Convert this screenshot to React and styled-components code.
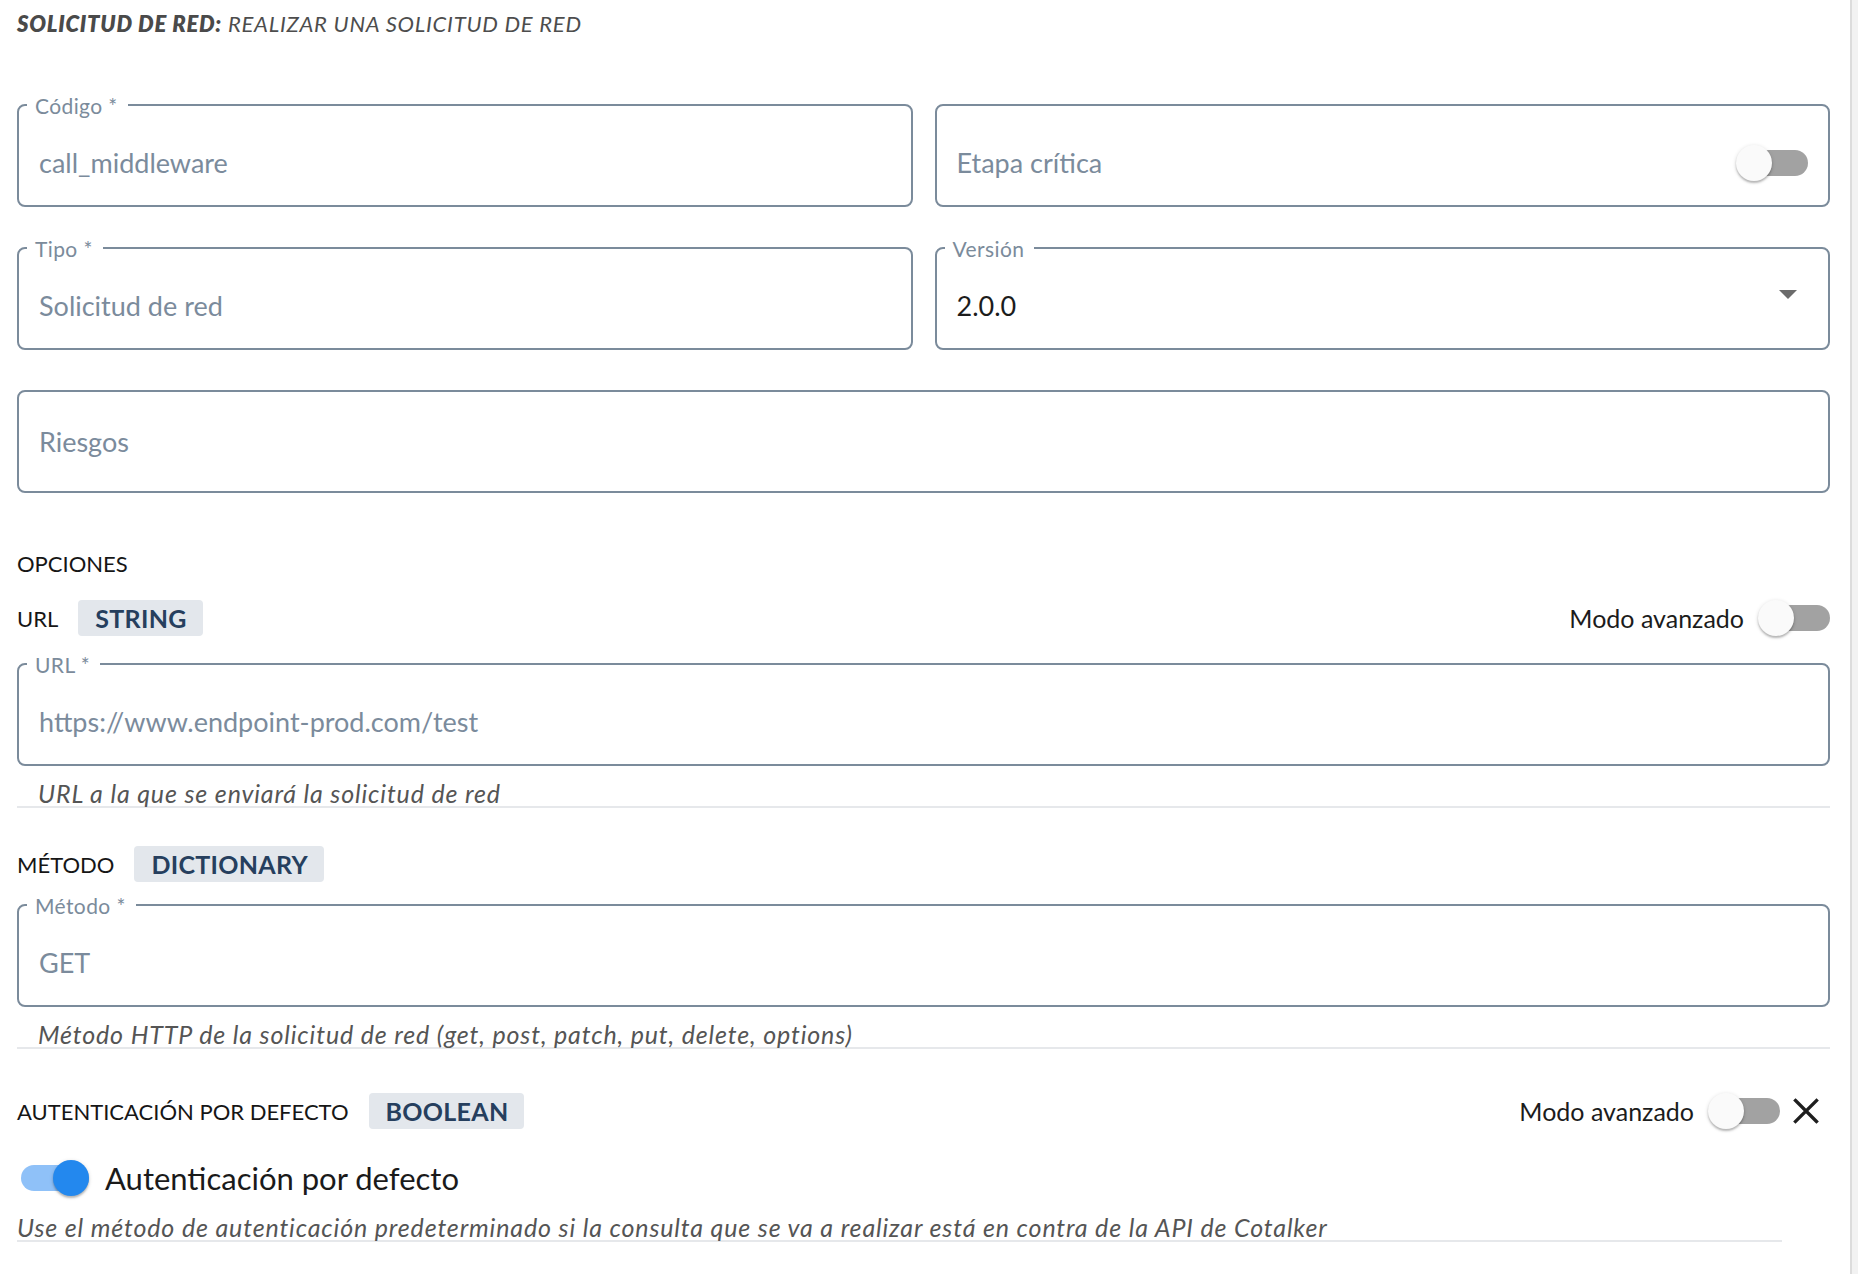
import React from "react";
import styled, { createGlobalStyle } from "styled-components";

const GlobalStyle = createGlobalStyle`
  html, body {
    margin: 0;
    padding: 0;
    background: #fff;
  }
  body {
    font-family: Lato, "Open Sans", sans-serif;
    color: #1f1f1f;
  }
`;

const Screen = styled.div`
  display: flex;
  min-height: 1274px;
`;

const Page = styled.main`
  flex: 1;
  padding: 12px 20px 0 17px;
`;

const ScrollTrack = styled.div`
  width: 6px;
  background: #f2f2f2;
  border-left: 2px solid #dcdcdc;
`;

const Title = styled.h1`
  margin: 0;
  font-size: 22px;
  line-height: 24px;
  font-style: italic;
  font-weight: 400;
  color: #4d4d4d;
  letter-spacing: 0.75px;

  b {
    font-weight: 800;
    color: #4a4a4a;
  }
`;

const Grid = styled.div`
  display: grid;
  grid-template-columns: 1fr 1fr;
  column-gap: 22px;
  row-gap: 40px;
  margin-top: 68px;
`;

const Field = styled.div`
  position: relative;
  grid-column: ${(p) => (p.$wide ? "1 / -1" : "auto")};
  height: 103px;
  box-sizing: border-box;
  border: 2px solid #7b8b9b;
  border-radius: 8px;
  display: flex;
  align-items: center;
  padding: ${(p) => (p.$raised ? "14px" : "0")} 20px 0 20px;
`;

const FieldLabel = styled.span`
  position: absolute;
  top: -11px;
  left: 8px;
  padding: 0 10px 0 8px;
  background: #fff;
  font-size: 21px;
  line-height: 22px;
  letter-spacing: 0.4px;
  color: #7b8b9b;
`;

const Value = styled.span`
  flex: 1;
  font-size: 27px;
  color: ${(p) => (p.$dark ? "#1c1c1c" : "#7b8b9c")};
`;

const Caret = styled.span`
  width: 0;
  height: 0;
  border-left: 9px solid transparent;
  border-right: 9px solid transparent;
  border-top: 9px solid #6b6b6b;
  margin: 0 11px 22px 0;
`;

const SwitchBox = styled.span`
  position: relative;
  display: inline-block;
  flex: none;
  width: 72px;
  height: 38px;
`;

const Track = styled.span`
  position: absolute;
  left: 4px;
  right: 0;
  top: 6px;
  height: 26px;
  border-radius: 13px;
  background: ${(p) => (p.$on ? "#8fc1f8" : "#a2a2a2")};
`;

const Thumb = styled.span`
  position: absolute;
  top: 1px;
  ${(p) => (p.$on ? "right: 0;" : "left: 0;")}
  width: 36px;
  height: 36px;
  border-radius: 50%;
  background: ${(p) => (p.$on ? "#2388ee" : "#fafafa")};
  box-shadow: 0 2px 2px rgba(0, 0, 0, 0.22), 0 1px 4px rgba(0, 0, 0, 0.14);
`;

function Switch({ on }) {
  return (
    <SwitchBox>
      <Track $on={on} />
      <Thumb $on={on} />
    </SwitchBox>
  );
}

const SectionTitle = styled.div`
  margin-top: 58px;
  font-size: 22px;
  line-height: 26px;
  color: #161616;
`;

const Section = styled.section`
  margin-top: ${(p) => p.$top}px;
  padding-right: ${(p) => (p.$narrow ? "48px" : "0")};
`;

const HeaderRow = styled.div`
  display: flex;
  align-items: center;
  height: 40px;
  margin-right: ${(p) => (p.$narrow ? "-48px" : "0")};
`;

const OptName = styled.span`
  font-size: 22px;
  color: #161616;
  margin-right: 20px;
`;

const Chip = styled.span`
  display: inline-flex;
  align-items: center;
  height: 36px;
  padding: 0 16px 0 17px;
  border-radius: 4px;
  background: #e3e7ec;
  color: #263f5e;
  font-weight: 700;
  font-size: 25px;
  letter-spacing: 0.3px;
`;

const Advanced = styled.div`
  margin-left: auto;
  display: flex;
  align-items: center;
  gap: 14px;
  font-size: 25px;
  color: #1c1c1c;
`;

const CloseIcon = styled.svg`
  width: 36px;
  height: 36px;
  margin-left: -6px;
  margin-right: 6px;
`;

const FieldWrap = styled.div`
  margin-top: ${(p) => p.$gap}px;
`;

const Helper = styled.div`
  margin-top: 14px;
  padding-left: ${(p) => (p.$flush ? "0" : "21px")};
  font-size: 25px;
  line-height: 26px;
  letter-spacing: 0.85px;
  font-style: italic;
  color: #555;
  border-bottom: 2px solid #e6e8eb;
  white-space: nowrap;
`;

const ToggleRow = styled.div`
  display: flex;
  align-items: center;
  gap: 16px;
  height: 44px;
  margin-top: 25px;
  font-size: 31px;
  color: #1a1a1a;
`;

export default function App() {
  return (
    <>
      <GlobalStyle />
      <Screen>
        <Page>
          <Title>
            <b>SOLICITUD DE RED:</b> REALIZAR UNA SOLICITUD DE RED
          </Title>

          <Grid>
            <Field $raised>
              <FieldLabel>Código *</FieldLabel>
              <Value>call_middleware</Value>
            </Field>
            <Field $raised>
              <Value>Etapa crítica</Value>
              <Switch on={false} />
            </Field>
            <Field $raised>
              <FieldLabel>Tipo *</FieldLabel>
              <Value>Solicitud de red</Value>
            </Field>
            <Field $raised>
              <FieldLabel>Versión</FieldLabel>
              <Value $dark>2.0.0</Value>
              <Caret />
            </Field>
            <Field $wide>
              <Value>Riesgos</Value>
            </Field>
          </Grid>

          <SectionTitle>OPCIONES</SectionTitle>

          <Section $top={21}>
            <HeaderRow>
              <OptName>URL</OptName>
              <Chip>STRING</Chip>
              <Advanced>
                Modo avanzado
                <Switch on={false} />
              </Advanced>
            </HeaderRow>
            <FieldWrap $gap={25}>
              <Field $raised>
                <FieldLabel>URL *</FieldLabel>
                <Value>https://www.endpoint-prod.com/test</Value>
              </Field>
            </FieldWrap>
            <Helper>URL a la que se enviará la solicitud de red</Helper>
          </Section>

          <Section $top={36}>
            <HeaderRow>
              <OptName>MÉTODO</OptName>
              <Chip>DICTIONARY</Chip>
            </HeaderRow>
            <FieldWrap $gap={20}>
              <Field $raised>
                <FieldLabel>Método *</FieldLabel>
                <Value>GET</Value>
              </Field>
            </FieldWrap>
            <Helper>
              Método HTTP de la solicitud de red (get, post, patch, put, delete, options)
            </Helper>
          </Section>

          <Section $top={42} $narrow>
            <HeaderRow $narrow>
              <OptName>AUTENTICACIÓN POR DEFECTO</OptName>
              <Chip>BOOLEAN</Chip>
              <Advanced>
                Modo avanzado
                <Switch on={false} />
                <CloseIcon viewBox="0 0 24 24" fill="none" stroke="#1e1e1e" strokeWidth="2.2" strokeLinecap="square">
                  <path d="M5 5l14 14M19 5L5 19" />
                </CloseIcon>
              </Advanced>
            </HeaderRow>
            <ToggleRow>
              <Switch on />
              Autenticación por defecto
            </ToggleRow>
            <Helper $flush>
              Use el método de autenticación predeterminado si la consulta que se va a realizar está en contra de la API de Cotalker
            </Helper>
          </Section>
        </Page>
        <ScrollTrack />
      </Screen>
    </>
  );
}
